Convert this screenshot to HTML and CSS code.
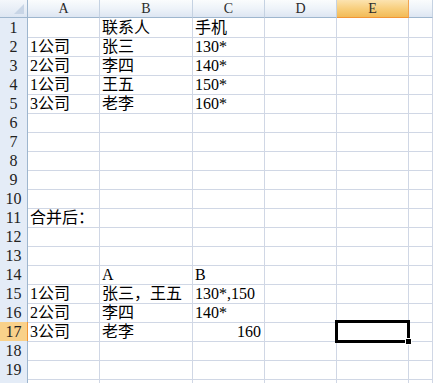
FILE: index.html
```html
<!DOCTYPE html>
<html lang="zh-CN">
<head>
    <meta charset="UTF-8">
    <title>Sheet1</title>
    <link rel="stylesheet" href="styles.css">
</head>
<body>
    <div class="sheet">
        <div class="row head">
            <div class="corner"></div>
            <div class="col">A</div>
            <div class="col">B</div>
            <div class="col">C</div>
            <div class="col">D</div>
            <div class="col active">E</div>
            <div class="col"></div>
        </div>
        <div class="row"><div class="num">1</div><div class="cell"></div><div class="cell">联系人</div><div class="cell">手机</div><div class="cell"></div><div class="cell"></div><div class="cell"></div></div>
        <div class="row"><div class="num">2</div><div class="cell">1公司</div><div class="cell">张三</div><div class="cell">130*</div><div class="cell"></div><div class="cell"></div><div class="cell"></div></div>
        <div class="row"><div class="num">3</div><div class="cell">2公司</div><div class="cell">李四</div><div class="cell">140*</div><div class="cell"></div><div class="cell"></div><div class="cell"></div></div>
        <div class="row"><div class="num">4</div><div class="cell">1公司</div><div class="cell">王五</div><div class="cell">150*</div><div class="cell"></div><div class="cell"></div><div class="cell"></div></div>
        <div class="row"><div class="num">5</div><div class="cell">3公司</div><div class="cell">老李</div><div class="cell">160*</div><div class="cell"></div><div class="cell"></div><div class="cell"></div></div>
        <div class="row"><div class="num">6</div><div class="cell"></div><div class="cell"></div><div class="cell"></div><div class="cell"></div><div class="cell"></div><div class="cell"></div></div>
        <div class="row"><div class="num">7</div><div class="cell"></div><div class="cell"></div><div class="cell"></div><div class="cell"></div><div class="cell"></div><div class="cell"></div></div>
        <div class="row"><div class="num">8</div><div class="cell"></div><div class="cell"></div><div class="cell"></div><div class="cell"></div><div class="cell"></div><div class="cell"></div></div>
        <div class="row"><div class="num">9</div><div class="cell"></div><div class="cell"></div><div class="cell"></div><div class="cell"></div><div class="cell"></div><div class="cell"></div></div>
        <div class="row"><div class="num">10</div><div class="cell"></div><div class="cell"></div><div class="cell"></div><div class="cell"></div><div class="cell"></div><div class="cell"></div></div>
        <div class="row"><div class="num">11</div><div class="cell overflow">合并后：</div><div class="cell"></div><div class="cell"></div><div class="cell"></div><div class="cell"></div><div class="cell"></div></div>
        <div class="row"><div class="num">12</div><div class="cell"></div><div class="cell"></div><div class="cell"></div><div class="cell"></div><div class="cell"></div><div class="cell"></div></div>
        <div class="row"><div class="num">13</div><div class="cell"></div><div class="cell"></div><div class="cell"></div><div class="cell"></div><div class="cell"></div><div class="cell"></div></div>
        <div class="row"><div class="num">14</div><div class="cell"></div><div class="cell">A</div><div class="cell">B</div><div class="cell"></div><div class="cell"></div><div class="cell"></div></div>
        <div class="row"><div class="num">15</div><div class="cell">1公司</div><div class="cell">张三，王五</div><div class="cell">130*,150</div><div class="cell"></div><div class="cell"></div><div class="cell"></div></div>
        <div class="row"><div class="num">16</div><div class="cell">2公司</div><div class="cell">李四</div><div class="cell">140*</div><div class="cell"></div><div class="cell"></div><div class="cell"></div></div>
        <div class="row"><div class="num active">17</div><div class="cell">3公司</div><div class="cell">老李</div><div class="cell number">160</div><div class="cell"></div><div class="cell selected"></div><div class="cell"></div></div>
        <div class="row"><div class="num">18</div><div class="cell"></div><div class="cell"></div><div class="cell"></div><div class="cell"></div><div class="cell"></div><div class="cell"></div></div>
        <div class="row"><div class="num">19</div><div class="cell"></div><div class="cell"></div><div class="cell"></div><div class="cell"></div><div class="cell"></div><div class="cell"></div></div>
        <div class="row"><div class="num"></div><div class="cell"></div><div class="cell"></div><div class="cell"></div><div class="cell"></div><div class="cell"></div><div class="cell"></div></div>
    </div>
</body>
</html>
```

FILE: styles.css
```css
body {
    margin: 0;
    padding: 0;
    background: #fff;
    font-family: "Liberation Serif", "Noto Sans CJK SC", serif;
    overflow: hidden;
}
.sheet {
    width: 433px;
}
.row {
    display: grid;
    grid-template-columns: 28px 72px 93px 72px 72px 72px 1fr;
    height: 19px;
}
.row.head {
    height: 18px;
}
.row > div {
    box-sizing: border-box;
    border-right: 1px solid #d0d7e5;
    border-bottom: 1px solid #d0d7e5;
}
.corner {
    position: relative;
    background: linear-gradient(#f4f7fb, #dde6f2);
    border-right: 1px solid #9eb6ce !important;
    border-bottom: 1px solid #9eb6ce !important;
}
.corner::after {
    content: "";
    position: absolute;
    right: 3px;
    bottom: 3px;
    border-left: 10px solid transparent;
    border-bottom: 10px solid #c8d5e6;
}
.col {
    background: linear-gradient(#fafcfd 0%, #eef3f9 50%, #dde6f2 100%);
    border-right: 1px solid #c5d2e2 !important;
    border-bottom: 1px solid #9eb6ce !important;
    color: #2b2b2b;
    font-size: 14px;
    line-height: 17px;
    text-align: center;
}
.col.active {
    background: linear-gradient(#fce3b0 0%, #f8cf7e 50%, #f2bb57 100%);
    border-right: 1px solid #f2a450 !important;
    border-bottom: 1px solid #f29536 !important;
}
.num {
    background: #e4ecf7;
    border-right: 1px solid #9eb6ce !important;
    border-bottom: 1px solid #c5d2e2 !important;
    color: #222;
    font-size: 16px;
    line-height: 19px;
    text-align: center;
}
.num.active {
    background: #f9d18a;
    border-right: 1px solid #f29536 !important;
}
.cell {
    font-size: 16px;
    line-height: 19px;
    color: #000;
    padding-left: 2px;
    white-space: nowrap;
}
.cell.overflow {
    position: relative;
    z-index: 1;
}
.cell.number {
    text-align: right;
    padding-right: 3px;
}
.cell.selected {
    position: relative;
}
.cell.selected::before {
    content: "";
    position: absolute;
    left: -2px;
    top: -2px;
    right: -2px;
    bottom: -2px;
    border: 3px solid #000;
}
.cell.selected::after {
    content: "";
    position: absolute;
    right: -4px;
    bottom: -4px;
    width: 5px;
    height: 5px;
    background: #000;
    border: 1px solid #fff;
}
```
